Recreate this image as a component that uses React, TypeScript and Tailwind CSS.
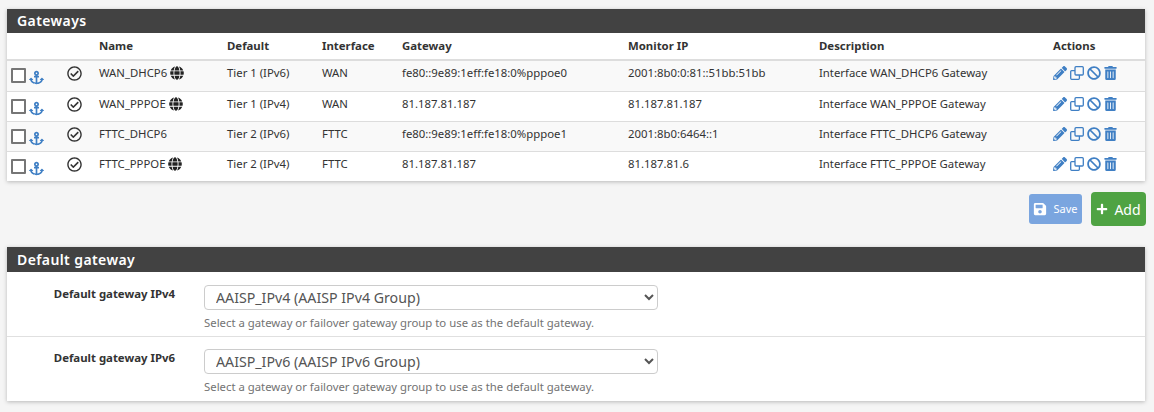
import { FaAnchor, FaBan, FaGlobe, FaPencilAlt, FaPlus, FaRegCheckCircle, FaSave, FaTrashAlt } from 'react-icons/fa';

const rows = [
  { name: 'WAN_DHCP6', globe: true, tier: 'Tier 1 (IPv6)', iface: 'WAN', gateway: 'fe80::9e89:1eff:fe18:0%pppoe0', monitor: '2001:8b0:0:81::51bb:51bb', desc: 'Interface WAN_DHCP6 Gateway' },
  { name: 'WAN_PPPOE', globe: true, tier: 'Tier 1 (IPv4)', iface: 'WAN', gateway: '81.187.81.187', monitor: '81.187.81.187', desc: 'Interface WAN_PPPOE Gateway' },
  { name: 'FTTC_DHCP6', globe: false, tier: 'Tier 2 (IPv6)', iface: 'FTTC', gateway: 'fe80::9e89:1eff:fe18:0%pppoe1', monitor: '2001:8b0:6464::1', desc: 'Interface FTTC_DHCP6 Gateway' },
  { name: 'FTTC_PPPOE', globe: true, tier: 'Tier 2 (IPv4)', iface: 'FTTC', gateway: '81.187.81.187', monitor: '81.187.81.6', desc: 'Interface FTTC_PPPOE Gateway' },
];

const gridCols = 'grid grid-cols-[92px_128px_95px_80px_226px_191px_234px_1fr]';
const rowHeights = ['h-[31px]', 'h-[30px]', 'h-[30px]', 'h-[29px]'];

function Heading({ title, tall }: { title: string; tall?: boolean }) {
  return (
    <div className={`${tall ? 'h-[25px] leading-[25px]' : 'h-[24px] leading-[24px]'} bg-[#424242] pl-[10px] text-[14px] font-semibold tracking-[0.4px] text-white`}>
      {title}
    </div>
  );
}

function CloneIcon() {
  return (
    <svg viewBox="0 0 14 14" className="h-[14px] w-[14px]" fill="none" stroke="currentColor" strokeWidth="1.3">
      <rect x="5" y="0.7" width="8.3" height="8.3" rx="1" />
      <path d="M5 4.6H1.7a1 1 0 0 0-1 1v6.7a1 1 0 0 0 1 1h6.7a1 1 0 0 0 1-1V9" />
    </svg>
  );
}

function GatewayRow({ title, value }: { title: string; value: string }) {
  return (
    <div className="flex h-[64px] border-b border-[#e0e0e0] pt-[12px] last:border-b-0">
      <div className="w-[197px] pr-[29px] text-right text-[11.4px] leading-[18px] font-bold text-[#333]">{title}</div>
      <div className="w-[454px]">
        <select
          defaultValue={value}
          className="h-[25px] w-full rounded-[4px] border border-[#ccc] bg-white pl-[7px] text-[14.2px] text-[#555]"
        >
          <option>{value}</option>
        </select>
        <p className="mt-[5px] text-[11.35px] leading-[16px] text-[#737373]">Select a gateway or failover gateway group to use as the default gateway.</p>
      </div>
    </div>
  );
}

export default function App() {
  return (
    <div className="h-[412px] w-[1154px] overflow-hidden bg-[#f5f5f5] pt-[9px] pl-[7px] font-['Noto_Sans',sans-serif] text-[#333]">
      <div className="w-[1138px] bg-white shadow-[0_1px_4px_rgba(0,0,0,0.25)]">
        <Heading title="Gateways" />
        <div className={`${gridCols} h-[28px] border-b-2 border-[#ddd] text-[11.4px] leading-[26px] font-bold`}>
          <div />
          <div>Name</div>
          <div>Default</div>
          <div>Interface</div>
          <div>Gateway</div>
          <div>Monitor IP</div>
          <div>Description</div>
          <div>Actions</div>
        </div>
        {rows.map((r, i) => (
          <div
            key={r.name}
            className={`${gridCols} ${rowHeights[i]} border-b border-[#ddd] text-[11.35px] leading-[24px] last:border-b-0 ${i % 2 === 0 ? 'bg-[#f9f9f9]' : 'bg-white'}`}
          >
            <div className="flex items-start pl-[4px]">
              <input type="checkbox" className="mt-[7px] h-[15px] w-[15px] appearance-none rounded-[1px] border-2 border-[#767676] bg-white" />
              <FaAnchor className="mt-[9px] ml-[3px] h-[15px] w-[15px] text-[#3f7fc4]" />
              <FaRegCheckCircle className="mt-[5px] ml-[23px] h-[15px] w-[15px] text-[#333]" />
            </div>
            <div className="flex items-start gap-[3px]">
              {r.name}
              {r.globe && <FaGlobe className="mt-[5px] h-[14px] w-[14px] text-[#222]" />}
            </div>
            <div>{r.tier}</div>
            <div>{r.iface}</div>
            <div>{r.gateway}</div>
            <div>{r.monitor}</div>
            <div>{r.desc}</div>
            <div className="flex items-start gap-[3px] pt-[5px] text-[#3f7fc4]">
              <FaPencilAlt className="h-[14px] w-[14px]" />
              <CloneIcon />
              <FaBan className="h-[14px] w-[14px]" />
              <FaTrashAlt className="h-[14px] w-[13px]" />
            </div>
          </div>
        ))}
      </div>

      <div className="flex h-[66px] w-[1139px] items-start justify-end gap-[9px] pt-[11px]">
        <button className="mt-[2px] flex h-[30px] w-[53px] items-center justify-center gap-[6px] rounded-[3px] bg-[#7aa5df] text-[11px] text-white">
          <FaSave className="h-[14px] w-[14px]" />
          Save
        </button>
        <button className="flex h-[34px] w-[55px] items-center justify-center gap-[6px] rounded-[4px] bg-[#4fa343] text-[14px] text-white">
          <FaPlus className="h-[12px] w-[12px]" />
          Add
        </button>
      </div>

      <div className="w-[1138px] bg-white shadow-[0_1px_4px_rgba(0,0,0,0.25)]">
        <Heading title="Default gateway" tall />
        <div className="pt-px">
          <GatewayRow title="Default gateway IPv4" value="AAISP_IPv4 (AAISP IPv4 Group)" />
          <GatewayRow title="Default gateway IPv6" value="AAISP_IPv6 (AAISP IPv6 Group)" />
        </div>
      </div>
    </div>
  );
}
